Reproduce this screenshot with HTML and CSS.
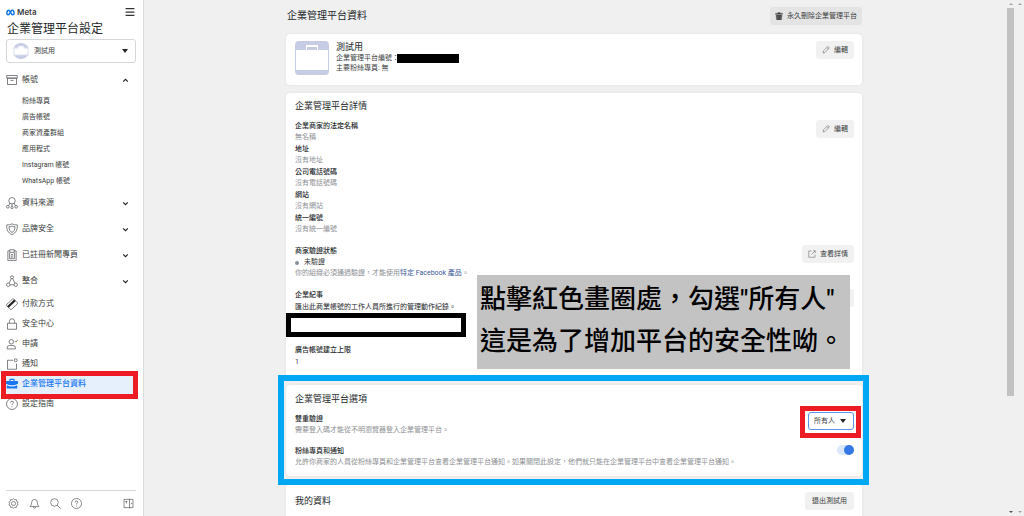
FILE: index.html
```html
<!DOCTYPE html>
<html lang="zh-Hant-TW">
<head>
<meta charset="utf-8">
<meta name="viewport" content="width=device-width, initial-scale=1">
<title>企業管理平台設定</title>
<link rel="stylesheet" href="styles.css">
</head>
<body>
<div class="app">
  <aside class="sidebar">
    <div class="brand-row">
      <span class="brand">
        <svg class="brand-mark" viewBox="0 0 20 14" aria-hidden="true"><path d="M2 9.500C2 5 4 2 6.300 2C9.500 2 11 12 14.800 12C17 12 18 10.800 18 9C18 5 16.200 2 13.800 2C10.500 2 8.800 12 4.800 12C3 12 2 11 2 9.500Z"/></svg>
        Meta
      </span>
      <button class="icon-button" aria-label="選單"><svg class="icon menu-icon" viewBox="0 0 16 16"><path d="M1 2.500h14M1 8h14M1 13.500h14"/></svg></button>
    </div>
    <h1 class="side-title">企業管理平台設定</h1>
    <div class="account">
      <svg class="avatar" viewBox="0 0 16 16" aria-hidden="true"><circle cx="8" cy="8" r="8" fill="#c5cce3"/><path d="M0 5h5V3h6v2h5v7H0z" fill="#fff"/><path d="M0 5h5V3h6v2h5M0 12h16M1 5v7M15 5v7" fill="none" stroke="#dde1ef"/></svg>
      <select class="account-select" aria-label="企業帳號"><option>測試用</option></select>
      <svg class="caret" viewBox="0 0 6 4" aria-hidden="true"><path d="M0 0h6L3 4z"/></svg>
    </div>
    <nav class="nav" aria-label="設定">
      <button class="nav-item group" aria-expanded="true">
        <svg class="icon nav-icon" viewBox="0 0 16 16"><path d="M1 2h14v3.500H1zM2 5.500h12V14H2zM6 8.500h4"/></svg>
        <span class="nav-label">帳號</span>
        <svg class="icon chevron" viewBox="0 0 6 6"><path d="M1 4l2-2 2 2"/></svg>
      </button>
      <div class="subnav">
        <a href="#pages">粉絲專頁</a>
        <a href="#ads">廣告帳號</a>
        <a href="#assets">商家資產群組</a>
        <a href="#apps">應用程式</a>
        <a href="#instagram">Instagram 帳號</a>
        <a href="#whatsapp">WhatsApp 帳號</a>
      </div>
      <button class="nav-item group" aria-expanded="false">
        <svg class="icon nav-icon" viewBox="0 0 16 16"><circle cx="8" cy="5" r="4.300"/><circle cx="2.500" cy="13" r="1.800"/><circle cx="8" cy="14" r="1.500"/><circle cx="13.500" cy="13" r="1.800"/><path d="M5.500 8L3.500 11.500M8 9v3.500M10.500 8l2 3.500"/></svg>
        <span class="nav-label">資料來源</span>
        <svg class="icon chevron" viewBox="0 0 6 6"><path d="M1 2l2 2 2-2"/></svg>
      </button>
      <button class="nav-item group" aria-expanded="false">
        <svg class="icon nav-icon" viewBox="0 0 16 16"><path d="M8 1C6 2.500 3.500 2.500 1 2.500C.5 9 2.500 13 8 15.500C13.500 13 15.500 9 15 2.500C12.500 2.500 10 2.500 8 1Z"/><path d="M8 4C7 4.800 5.800 5 4 5C4 9 5.500 11.500 8 12.500C10.500 11.500 12 9 12 5C10.200 5 9 4.800 8 4Z"/></svg>
        <span class="nav-label">品牌安全</span>
        <svg class="icon chevron" viewBox="0 0 6 6"><path d="M1 2l2 2 2-2"/></svg>
      </button>
      <button class="nav-item group" aria-expanded="false">
        <svg class="icon nav-icon" viewBox="0 0 16 16"><path d="M5 2.500H2.500v13h11v-13H11M5 1h6v3.500H5zM4.800 5v8h6.400V5M6.500 7.500h3M6.500 9.500h3M6.500 11.500h2"/></svg>
        <span class="nav-label">已註冊新聞專頁</span>
        <svg class="icon chevron" viewBox="0 0 6 6"><path d="M1 2l2 2 2-2"/></svg>
      </button>
      <button class="nav-item group" aria-expanded="false">
        <svg class="icon nav-icon" viewBox="0 0 16 16"><circle cx="8" cy="3" r="2"/><circle cx="3" cy="13" r="2.300"/><circle cx="13" cy="13" r="2.300"/><path d="M7 5L4 11M9 5l3 6M5.500 13h5"/></svg>
        <span class="nav-label">整合</span>
        <svg class="icon chevron" viewBox="0 0 6 6"><path d="M1 2l2 2 2-2"/></svg>
      </button>
      <a class="nav-item" href="#payments">
        <svg class="icon nav-icon" viewBox="0 0 16 16"><path d="M1 8.500L8.500 1.500Q9.500 .7 10.500 1.500L15 6Q15.700 7 15 8L7.500 15Q6.500 15.700 5.500 15L1 10.500Q.3 9.500 1 8.500Z"/><path class="stripe" d="M2.500 12L12 3"/></svg>
        <span class="nav-label">付款方式</span>
      </a>
      <a class="nav-item" href="#security">
        <svg class="icon nav-icon" viewBox="0 0 16 16"><path d="M2 7h12v8H2zM4.500 7V4.500a3.500 3.500 0 0 1 7 0V7"/></svg>
        <span class="nav-label">安全中心</span>
      </a>
      <a class="nav-item" href="#requests">
        <svg class="icon nav-icon" viewBox="0 0 16 16"><circle cx="7" cy="5" r="3"/><path d="M1.500 14.500V13q0-3 3-3h5q3 0 3 3v1.500zM11.500 4l1.500 1.500L16 2.500"/></svg>
        <span class="nav-label">申請</span>
      </a>
      <a class="nav-item" href="#notifications">
        <svg class="icon nav-icon" viewBox="0 0 16 16"><path d="M9.500 3H2v12h12V7.500"/><circle cx="13" cy="3" r="2"/></svg>
        <span class="nav-label">通知</span>
      </a>
      <a class="nav-item active" href="#info" aria-current="page">
        <svg class="nav-icon filled" viewBox="0 0 16 16"><path d="M4.500 4V2q0-1 1-1h5q1 0 1 1v2H15q1 0 1 1v2.500Q12 9.500 8 9.500T0 7.500V5q0-1 1-1zM6 4h4V2.500H6zM1 9.500q3.500 1.800 7 1.800t7-1.800V14H1z"/></svg>
        <span class="nav-label">企業管理平台資料</span>
        <span class="mark mark-nav"></span>
      </a>
      <a class="nav-item" href="#guide">
        <svg class="icon nav-icon" viewBox="0 0 16 16"><circle cx="8" cy="8" r="7.300"/><path d="M6 6.300q0-2 2-2t2 1.700q0 1-1 1.500T8 9.300M8 11v1.300"/></svg>
        <span class="nav-label">設定指南</span>
      </a>
    </nav>
    <div class="side-tools">
      <button class="icon-button" aria-label="設定"><svg class="icon tool-icon" viewBox="0 0 16 16"><path d="M8 1l1.800 1.500 2.300-.2.500 2.300 2 1.300L13.800 8l.8 2.100-2 1.300-.5 2.300-2.300-.2L8 15l-1.800-1.500-2.300.2-.5-2.300-2-1.300L2.200 8l-.8-2.100 2-1.300.5-2.300 2.300.2z"/><circle cx="8" cy="8" r="3"/></svg></button>
      <button class="icon-button" aria-label="通知"><svg class="icon tool-icon" viewBox="0 0 16 16"><path d="M1.500 12.500Q4 10 4 6q0-4 4-4t4 4q0 4 2.500 6.500zM6.500 12.500q0 2.500 1.500 2.500t1.500-2.500"/></svg></button>
      <button class="icon-button" aria-label="搜尋"><svg class="icon tool-icon" viewBox="0 0 16 16"><circle cx="6.500" cy="6.500" r="5.500"/><path d="M10.500 10.500L15.500 15.500"/></svg></button>
      <button class="icon-button" aria-label="說明"><svg class="icon tool-icon" viewBox="0 0 16 16"><circle cx="8" cy="8" r="7.300"/><path d="M6 6.300q0-2 2-2t2 1.700q0 1-1 1.500T8 9.300M8 11v1.300"/></svg></button>
      <button class="icon-button last" aria-label="收合側邊欄"><svg class="icon tool-icon" viewBox="0 0 16 16"><path d="M1.500 2h13v12h-13zM9.500 1v14M3 5h3.500M5 5v3M11.500 8h2"/></svg></button>
    </div>
  </aside>

  <main class="main">
    <div class="content">
      <header class="page-head">
        <h2 class="page-title">企業管理平台資料</h2>
        <button class="button button-dark"><svg class="button-icon trash" viewBox="0 0 16 16"><path d="M5.500 2.500V1h5v1.500H15V5H1V2.500zM2 6h12l-1 10H3zM5 8v6M8 8v6M11 8v6"/></svg>永久刪除企業管理平台</button>
      </header>

      <section class="card profile">
        <svg class="logo" viewBox="0 0 34 34" aria-hidden="true"><rect width="34" height="34" rx="4" fill="#c5cce3"/><path d="M11 9V4h12v5h10v19q0 1-1 1H2q-1 0-1-1V9z" fill="#fff"/><path d="M12 9V6h10v3z" fill="#c5cce3"/></svg>
        <div class="profile-text">
          <h3 class="profile-name">測試用</h3>
          <p class="profile-id">企業管理平台編號：<span class="redacted"></span></p>
          <p>主要粉絲專頁: 無</p>
        </div>
        <button class="button"><svg class="icon button-icon" viewBox="0 0 16 16"><path d="M2 14l1-4.500L11 1.500q1-1 2.500.5t.5 2.500L6 13zM9.500 3l3.500 3.500"/></svg>編輯</button>
      </section>

      <section class="card details">
        <h3 class="card-title">企業管理平台詳情</h3>
        <div class="row">
          <dl class="facts">
            <dt>企業商家的法定名稱</dt><dd>無名稱</dd>
            <dt>地址</dt><dd>沒有地址</dd>
            <dt>公司電話號碼</dt><dd>沒有電話號碼</dd>
            <dt>網站</dt><dd>沒有網站</dd>
            <dt>統一編號</dt><dd>沒有統一編號</dd>
          </dl>
          <button class="button"><svg class="icon button-icon" viewBox="0 0 16 16"><path d="M2 14l1-4.500L11 1.500q1-1 2.500.5t.5 2.500L6 13zM9.500 3l3.500 3.500"/></svg>編輯</button>
        </div>
        <div class="row">
          <div>
            <h4 class="label">商家驗證狀態</h4>
            <p class="status">未驗證</p>
            <p class="muted">你的組織必須通過驗證，才能使用<a class="link" href="#products">特定 Facebook 產品</a>。</p>
          </div>
          <button class="button"><svg class="icon button-icon" viewBox="0 0 16 16"><path d="M7 2H1.500v12.500H14V9M10 1.500h4.500V6M14.500 1.500L7 9"/></svg>查看詳情</button>
        </div>
        <div class="row">
          <div>
            <h4 class="label">企業紀事</h4>
            <p class="log-text">匯出此商業帳號的工作人員所進行的管理動作紀錄。</p>
            <div class="frame"></div>
          </div>
          <button class="button export" aria-label="匯出"></button>
          <p class="note">點擊紅色畫圈處，勾選"所有人"<br>這是為了增加平台的安全性呦。</p>
        </div>
        <div>
          <h4 class="label">廣告帳號建立上限</h4>
          <p>1</p>
        </div>
      </section>

      <section class="card options">
        <h3 class="card-title">企業管理平台選項</h3>
        <div class="row option">
          <div>
            <label class="label" for="two-factor">雙重驗證</label>
            <p class="muted">需要登入碼才能從不明瀏覽器登入企業管理平台。</p>
          </div>
          <div class="picker">
            <select class="picker-select" id="two-factor"><option>所有人</option></select>
            <svg class="caret" viewBox="0 0 6 4" aria-hidden="true"><path d="M0 0h6L3 4z"/></svg>
            <span class="mark mark-picker"></span>
          </div>
        </div>
        <div class="row option">
          <div>
            <label class="label" for="page-notices">粉絲專頁和通知</label>
            <p class="muted">允許你商家的人員從粉絲專頁和企業管理平台查看企業管理平台通知。如果關閉此設定，他們就只能在企業管理平台中查看企業管理平台通知。</p>
          </div>
          <input class="toggle" type="checkbox" id="page-notices" checked>
        </div>
        <span class="mark mark-options"></span>
      </section>

      <section class="card mine">
        <h3 class="card-title">我的資料</h3>
        <button class="button button-text">退出測試用</button>
      </section>
    </div>
  </main>

  <div class="rails" aria-hidden="true">
    <div class="rail"><span class="up"></span><span class="thumb"></span><span class="down strong"></span></div>
    <div class="rail"><span class="up"></span><span class="down"></span></div>
  </div>
</div>
</body>
</html>
```
FILE: styles.css
```css
* { box-sizing: border-box; }

body {
  margin: 0;
  background: #f0f0f0;
  color: #3a3d40;
  font-family: Roboto, "Noto Sans CJK TC", sans-serif;
  font-size: 7px;
  line-height: 12px;
}

h1, h2, h3, h4, p, dl, dd { margin: 0; font-weight: 400; }
button, select { font: inherit; color: inherit; }
button { padding: 0; border: 0; background: none; }
a { color: inherit; text-decoration: none; }
svg { display: block; flex: none; }

.app { display: flex; height: 100vh; overflow: hidden; }

.icon { fill: none; stroke: #55585c; stroke-width: 1; }

/* Sidebar */
.sidebar {
  display: flex;
  flex-direction: column;
  flex: none;
  width: 144px;
  padding: 6px 7px 0 6px;
  border-right: 1px solid #dcdcdc;
  background: #fff;
}
.brand-row { display: flex; align-items: center; justify-content: space-between; height: 12px; padding-right: 1px; }
.brand { display: flex; align-items: center; gap: 2px; font-family: Inter, sans-serif; font-size: 8px; font-weight: 600; }
.brand-mark { width: 9px; height: 7px; fill: none; stroke: #0672e5; stroke-width: 3; }
.menu-icon { width: 10px; height: 10px; stroke: #333; stroke-width: 2; }
.side-title { padding: 3px 0 2px 1px; font-size: 12px; line-height: 16px; white-space: nowrap; color: #24272a; }

.account { position: relative; height: 24px; }
.account-select {
  width: 100%;
  height: 100%;
  padding: 0 20px 0 27px;
  border: 1px solid #d5d7da;
  border-radius: 3px;
  background: #fff;
  appearance: none;
}
.avatar { position: absolute; top: 4px; left: 7px; width: 16px; height: 16px; }
.caret { position: absolute; top: 50%; right: 8px; width: 6px; height: 4px; margin-top: -2px; fill: #24272a; pointer-events: none; }

.nav { display: flex; flex-direction: column; padding-top: 4px; }
.nav-item {
  position: relative;
  display: flex;
  align-items: center;
  gap: 4px;
  height: 20px;
  font-size: 8px;
  text-align: left;
}
.nav-item.group { height: 26px; padding-right: 7px; }
.nav-icon { width: 12px; height: 12px; }
.nav-label { flex: 1; }
.stripe { stroke-width: 3; stroke: #222; }
.chevron { width: 7px; height: 7px; stroke: #222; stroke-width: 1; }
.subnav { display: flex; flex-direction: column; padding: 0 0 1px 16px; line-height: 16px; }
.nav-item.active { border-radius: 3px; background: #e6f0fd; color: #1877f2; font-weight: 500; }
.filled { fill: #1877f2; }

.side-tools {
  display: flex;
  align-items: center;
  gap: 10px;
  height: 26px;
  margin-top: auto;
  padding: 0 2px;
  border-top: 1px solid #d5d7da;
}
.tool-icon { width: 11px; height: 11px; }
.last { margin-left: auto; }

/* Content */
.main { flex: 1; min-width: 0; }
.content { max-width: 576px; margin: 0 auto; }
.page-head { display: flex; align-items: center; justify-content: space-between; padding: 7px 0 9px 1px; }
.page-title { font-size: 10px; color: #24272a; }

.button {
  display: flex;
  align-items: center;
  flex: none;
  gap: 4px;
  height: 18px;
  padding: 0 6px;
  border-radius: 3px;
  background: #f1f1f1;
  white-space: nowrap;
}
.button-dark { padding: 0 5px; background: #e4e4e4; }
.button-text { padding: 0 7px; }
.button-icon { width: 8px; height: 8px; }
.trash { fill: #333; stroke: #888; stroke-width: 1; }

.card {
  position: relative;
  margin-bottom: 8px;
  padding: 8px 8px 8px 9px;
  border-radius: 4px;
  background: #fff;
  box-shadow: 0 0 2px #d9d9d9;
}
.card-title { font-size: 9px; color: #24272a; }
.row { position: relative; display: flex; align-items: flex-start; justify-content: space-between; }

.profile { display: flex; gap: 7px; padding-top: 7px; padding-bottom: 10px; }
.logo { width: 34px; height: 34px; }
.profile-text { flex: 1; line-height: 10px; }
.profile-name { font-size: 9px; line-height: 12px; color: #24272a; }
.profile-id { display: flex; align-items: center; }
.redacted { width: 62px; height: 9px; margin-left: -2px; background: #000; }

.details { display: grid; gap: 10px; padding-top: 7px; padding-bottom: 9px; }
.details .card-title { margin-bottom: -2px; }
.label, dt { display: block; font-weight: 500; color: #24272a; }
dd, .muted { line-height: 11px; color: #8d9094; }
.link { color: #385898; }
.status { display: flex; align-items: center; gap: 5px; line-height: 11px; }
.status::before { content: ""; width: 4px; height: 4px; border-radius: 50%; background: #8a9199; }
.log-text { color: #24272a; }
.frame { width: 180px; height: 24px; margin: 0 0 -3px -9px; border: 5px solid #000; background: #fff; }
.export { width: 38px; }

.options { display: grid; gap: 8px; }
.options .card-title { margin-bottom: -1px; }
.option { min-height: 24px; }
.option .label { padding-top: 1px; }
.picker { position: relative; flex: none; width: 46px; height: 18px; }
.picker-select {
  width: 100%;
  height: 100%;
  padding: 0 12px 0 5px;
  border: 1px solid #5b93ee;
  border-radius: 3px;
  background: #fff;
  appearance: none;
}
.toggle {
  display: flex;
  align-items: center;
  justify-content: flex-end;
  width: 17px;
  height: 10px;
  margin: 1px 0;
  border-radius: 5px;
  background: #dbe8fb;
  appearance: none;
}
.toggle::before { content: ""; width: 10px; height: 10px; border-radius: 50%; background: #3578e5; }
.mine { display: flex; align-items: center; justify-content: space-between; min-height: 60px; padding-bottom: 36px; }

/* Annotations over the page */
.mark { position: absolute; z-index: 2; pointer-events: none; }
.mark-nav { inset: -3px -2px -5px -5px; border: 5px solid #ed1c24; }
.mark-picker { inset: -6px -7px -8px -8px; border: 5px solid #ed1c24; }
.mark-options { inset: -10px -7px -9px -8px; border: 6px solid #00a8f3; }
.note {
  position: absolute;
  top: -14px;
  left: 182px;
  z-index: 1;
  padding: 3px 6px 7px 3px;
  background: #c3c3c3;
  color: #000;
  font-size: 26px;
  font-weight: 500;
  line-height: 42px;
  white-space: nowrap;
}

/* Scroll rails */
.rails { display: flex; flex: none; width: 20px; padding-left: 2px; }
.rail { display: flex; flex: 1; flex-direction: column; align-items: center; padding: 3px 0; }
.up, .down { border: 2px solid transparent; }
.up { border-top: 0; border-bottom-color: #a3a3a3; }
.down { margin-top: auto; border-bottom: 0; border-top-color: #a3a3a3; }
.strong { border-top-color: #505050; }
.thumb { width: 7px; height: 76%; margin-top: 3px; background: #c1c1c1; }
```
